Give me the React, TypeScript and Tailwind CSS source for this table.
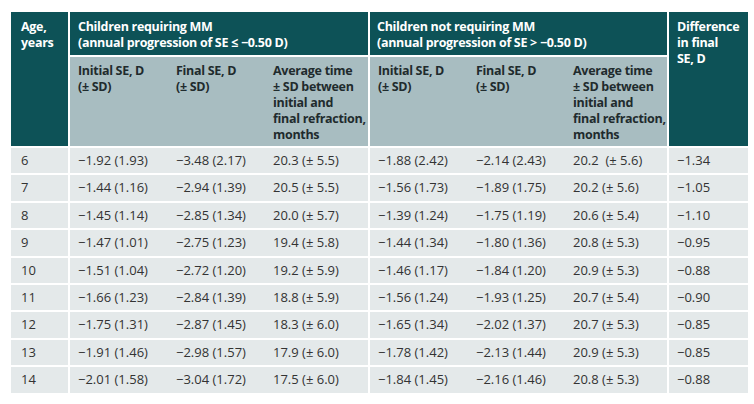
const rows: [string, string, string, string, string, string, string, string][] = [
  ['6', '−1.92 (1.93)', '−3.48 (2.17)', '20.3 (± 5.5)', '−1.88 (2.42)', '−2.14 (2.43)', '20.2  (± 5.6)', '−1.34'],
  ['7', '−1.44 (1.16)', '−2.94 (1.39)', '20.5 (± 5.5)', '−1.56 (1.73)', '−1.89 (1.75)', '20.2 (± 5.6)', '−1.05'],
  ['8', '−1.45 (1.14)', '−2.85 (1.34)', '20.0 (± 5.7)', '−1.39 (1.24)', '−1.75 (1.19)', '20.6 (± 5.4)', '−1.10'],
  ['9', '−1.47 (1.01)', '−2.75 (1.23)', '19.4 (± 5.8)', '−1.44 (1.34)', '−1.80 (1.36)', '20.8 (± 5.3)', '−0.95'],
  ['10', '−1.51 (1.04)', '−2.72 (1.20)', '19.2 (± 5.9)', '−1.46 (1.17)', '−1.84 (1.20)', '20.9 (± 5.3)', '−0.88'],
  ['11', '−1.66 (1.23)', '−2.84 (1.39)', '18.8 (± 5.9)', '−1.56 (1.24)', '−1.93 (1.25)', '20.7 (± 5.4)', '−0.90'],
  ['12', '−1.75 (1.31)', '−2.87 (1.45)', '18.3 (± 6.0)', '−1.65 (1.34)', '−2.02 (1.37)', '20.7 (± 5.3)', '−0.85'],
  ['13', '−1.91 (1.46)', '−2.98 (1.57)', '17.9 (± 6.0)', '−1.78 (1.42)', '−2.13 (1.44)', '20.9 (± 5.3)', '−0.85'],
  ['14', '−2.01 (1.58)', '−3.04 (1.72)', '17.5 (± 6.0)', '−1.84 (1.45)', '−2.16 (1.46)', '20.8 (± 5.3)', '−0.88'],
]

const head = "font-['Open_Sans',sans-serif] font-bold text-[12.5px] tracking-[-0.3px] leading-4"

function SubHeads() {
  return (
    <div className={`grid grid-cols-[98px_97px_103px] pt-[6px] text-[#1f2b2d] ${head}`}>
      <div className="pl-2">Initial SE, D<br />(± SD)</div>
      <div className="pl-2">Final SE, D<br />(± SD)</div>
      <div className="pl-2 whitespace-nowrap">
        Average time<br />± SD between<br />initial and<br />final refraction,<br />months
      </div>
    </div>
  )
}

function Triple({ a, b, c }: { a: string; b: string; c: string }) {
  return (
    <div className="grid grid-cols-[98px_97px_103px] items-center h-full bg-[#e4e9ea]">
      <div className="pl-2 whitespace-pre">{a}</div>
      <div className="pl-2 whitespace-pre">{b}</div>
      <div className="pl-2 whitespace-pre">{c}</div>
    </div>
  )
}

export default function App() {
  return (
    <div className="w-[754px] h-[404px] bg-white pl-[11px] pt-[12px] font-['Open_Sans',sans-serif]">
      <div className="w-[737px] grid grid-cols-[57px_298px_297px_79px] grid-rows-[43px_89px] auto-rows-[25.4px] gap-[2px] bg-white">
        <div className={`row-span-2 bg-[#0d5257] text-white pl-[10px] pt-[7px] ${head}`}>
          Age,<br />years
        </div>
        <div className={`bg-[#0d5257] text-white pl-2 pt-[7px] ${head}`}>
          Children requiring MM<br />(annual progression of SE ≤ −0.50 D)
        </div>
        <div className={`bg-[#0d5257] text-white pl-[7px] pt-[7px] ${head}`}>
          Children not requiring MM<br />(annual progression of SE &gt; −0.50 D)
        </div>
        <div className={`row-span-2 bg-[#0d5257] text-white pl-2 pt-[7px] ${head}`}>
          Difference<br />in final<br />SE, D
        </div>
        <div className="bg-[#a8bdc1]">
          <SubHeads />
        </div>
        <div className="bg-[#a8bdc1]">
          <SubHeads />
        </div>
        {rows.map((r) => (
          <div key={r[0]} className="contents text-[13px] text-[#333333]">
            <div className="bg-[#e4e9ea] pl-[10px] flex items-center">{r[0]}</div>
            <Triple a={r[1]} b={r[2]} c={r[3]} />
            <Triple a={r[4]} b={r[5]} c={r[6]} />
            <div className="bg-[#e4e9ea] pl-2 flex items-center">{r[7]}</div>
          </div>
        ))}
      </div>
    </div>
  )
}
